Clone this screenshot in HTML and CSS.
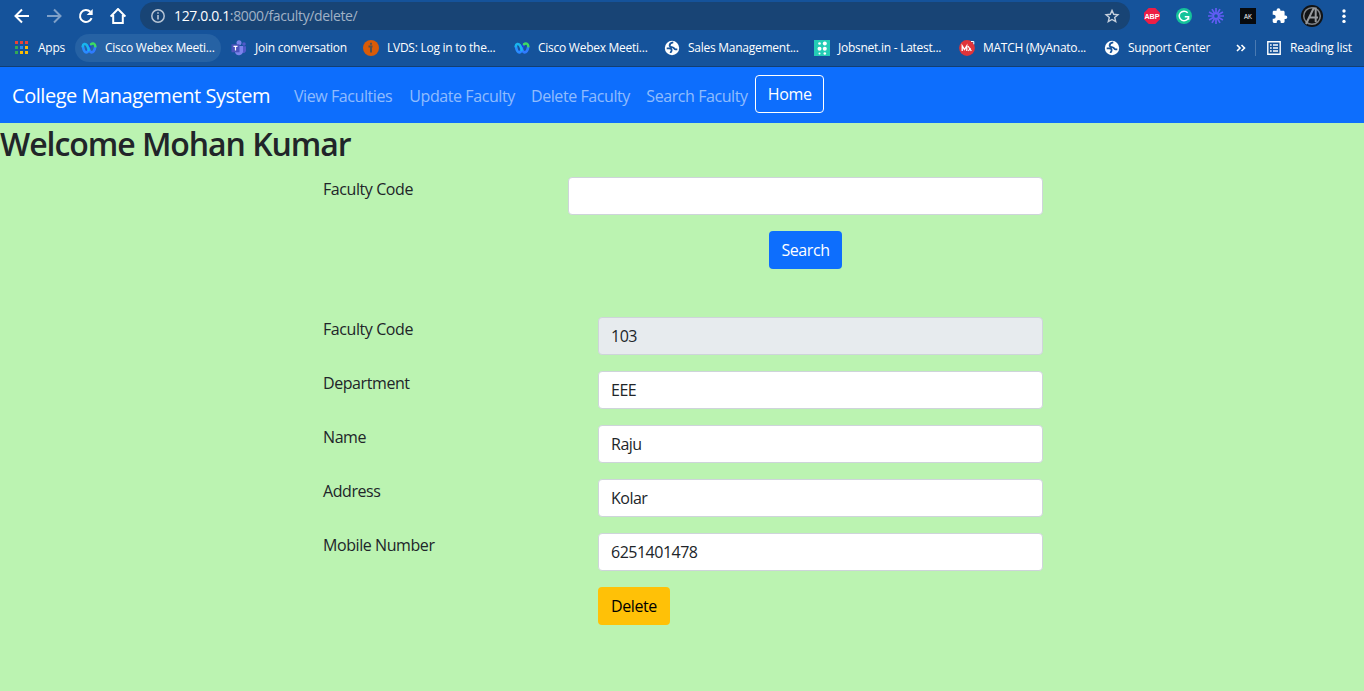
FILE: index.html
```html
<!DOCTYPE html>
<html lang="en">
<head>
<meta charset="utf-8">
<title>College Management System</title>
<link rel="stylesheet" href="styles.css">
</head>
<body>
<svg class="defs" width="0" height="0">
  <symbol id="webex" viewBox="0 0 16 16">
    <path d="M5 12.300c2.600 0 3.300-8.300 6-8.300" fill="none" stroke="#1c3fe6" stroke-width="3"/>
    <path d="M14.200 7C13.600 10.300 12 12.300 10.600 12.300 9 12.300 8.200 10.500 7.600 8" fill="none" stroke="#2f7bff" stroke-width="2.700" stroke-linecap="round"/>
    <path d="M1.900 6.500C2.600 10.300 3.600 12.300 5.300 12.300c.8 0 1.400-.5 1.900-1.500" fill="none" stroke="#2a8cff" stroke-width="2.700" stroke-linecap="round"/>
    <path d="M1.800 6.300C1.800 3.800 4.400 3 5.900 5.200 7 6.800 7.200 8.500 7.700 9.800" fill="none" stroke="#18b5ee" stroke-width="2.500" stroke-linecap="round"/>
    <path d="M10 4.300c1.700-1.500 4.200-.8 4.300 2" fill="none" stroke="#3ddb62" stroke-width="2.500" stroke-linecap="round"/>
  </symbol>
  <symbol id="globe" viewBox="0 0 16 16">
    <circle cx="8" cy="8" r="7.200" fill="#fff"/>
    <path d="M9.300 2.400C7.500 2.600 5.600 3.800 5.600 5.500c0 1.600 1.400 1.700 3.100 1.900 1.400.2 1.500 1.900 2.800 1.900h1.800M2.700 8.300h2.800c1.200.1 2.300.9 2.100 2.300-.2 1-1 .9-1 2.500" fill="none" stroke="#15539b" stroke-width="1.800"/>
  </symbol>
</svg>

<header class="browser">
  <div class="toolbar">
    <svg class="tool" viewBox="0 0 16 16"><path d="M15 8H2M8 1.500 1.500 8 8 14.500" fill="none" stroke="#fff" stroke-width="2"/></svg>
    <svg class="tool dim" viewBox="0 0 16 16"><path d="M1 8h13M8 1.500 14.500 8 8 14.500" fill="none" stroke="#fff" stroke-width="2"/></svg>
    <svg class="tool" viewBox="0 0 16 16"><path d="M13.600 10.200A6 6 0 1 1 12.300 3.800" fill="none" stroke="#fff" stroke-width="2"/><path d="M14.700 1v6H8.700z" fill="#fff"/></svg>
    <svg class="tool" viewBox="0 0 16 16"><path d="M.6 8.500 8 1l7.400 7.500M3.200 7v8h9.600V7" fill="none" stroke="#fff" stroke-width="2"/></svg>
    <div class="omnibox">
      <svg class="info" viewBox="0 0 16 16"><circle cx="8" cy="8" r="6.200" fill="none" stroke="#b6c4d4" stroke-width="1.500"/><path d="M8 7v4.500M8 4.200v1.600" stroke="#b6c4d4" stroke-width="1.600"/></svg>
      <span class="url"><b>127.0.0.1</b>:8000/faculty/delete/</span>
      <svg class="star" viewBox="0 0 16 16"><path d="m8 2.400 1.700 3.900 4.200.4-3.200 2.800 1 4.100L8 11.500l-3.700 2.100 1-4.100-3.200-2.800 4.200-.4z" fill="none" stroke="#c7d1dd" stroke-width="1.400"/></svg>
    </div>
    <div class="extensions">
      <svg viewBox="0 0 16 16"><path d="M4.700 0h6.600L16 4.700v6.600L11.300 16H4.700L0 11.300V4.700z" fill="#ed1e45"/><text x="8" y="10.700" class="abp">ABP</text></svg>
      <svg viewBox="0 0 16 16"><circle cx="8" cy="8" r="8" fill="#15c39a"/><path d="M11.700 4.800A4.800 4.800 0 1 0 12.600 9.500M8.800 8.800h3.800v3" fill="none" stroke="#fff" stroke-width="1.500"/></svg>
      <svg viewBox="0 0 16 16"><g stroke="#625df5" stroke-width="1.700"><path d="M8 0v16M0 8h16M4 1.070l8 13.860M1.070 4l13.860 8M1.070 12 14.930 4M4 14.930 12 1.070"/></g><circle cx="8" cy="8" r="2.500" fill="#15539b" stroke="#625df5" stroke-width="1.300"/></svg>
      <svg viewBox="0 0 16 16"><path d="M0 0h16v16H0z" fill="#070a0e"/><text transform="translate(8 10.900) scale(.75 1)" class="ak">AK</text></svg>
      <svg viewBox="0 0 16 16"><path d="M13.600 7.500h-1V4.200c0-.8-.6-1.400-1.400-1.400H8.400v-.7a1.900 1.900 0 0 0-3.800 0v.7H2C1.200 2.800.7 3.400.7 4.200v2.600h1a2 2 0 0 1 0 4h-1v2.700c0 .8.600 1.400 1.300 1.400h2.700v-1a2 2 0 0 1 4 0v1h2.500c.8 0 1.400-.6 1.400-1.400v-2.600h1a1.700 1.700 0 0 0 0-3.400z" fill="#fff"/></svg>
      <svg class="avatar" viewBox="0 0 22 22"><circle cx="11" cy="11" r="11" fill="#111315"/><circle cx="11" cy="11" r="8.300" fill="none" stroke="#7d8186" stroke-width="1.500"/><path d="M5 19 12.500 3.500h2.200V17M8.500 12.500H17" fill="none" stroke="#96999d" stroke-width="2"/></svg>
      <svg class="menu" viewBox="0 0 16 16"><g fill="#fff"><circle cx="8" cy="3" r="1.700"/><circle cx="8" cy="8.200" r="1.700"/><circle cx="8" cy="13.400" r="1.700"/></g></svg>
    </div>
  </div>

  <div class="bookmarks">
    <div class="mark"><svg viewBox="0 0 16 16"><path d="M1 1h3v3H1zM6 1h3v3H6zM11 1h3v3h-3z" fill="#ea4335"/><path d="M1 6h3v3H1zM1 11h3v3H1z" fill="#34a853"/><path d="M6 6h3v3H6z" fill="#2f8cf0"/><path d="M11 6h3v3h-3zM6 11h3v3H6zM11 11h3v3h-3z" fill="#fbbc05"/></svg><span>Apps</span></div>
    <div class="mark active"><svg viewBox="0 0 16 16"><use href="#webex"/></svg><span>Cisco Webex Meeti...</span></div>
    <div class="mark"><svg viewBox="0 0 16 16"><circle cx="13" cy="4" r="1.800" fill="#5059c9"/><path d="M10 6.200h5v4.300a2.500 2.500 0 0 1-4 2z" fill="#5059c9"/><circle cx="8" cy="2.700" r="2.500" fill="#7b83eb"/><path d="M4 6h8v5.500a4.100 4.100 0 0 1-8 .8z" fill="#7b83eb"/><path d="M.5 4.300h8v8h-8z" fill="#4b53bc"/><path d="M2.500 6.300h4M4.500 6.300v4.300" stroke="#fff" stroke-width="1.200"/></svg><span>Join conversation</span></div>
    <div class="mark"><svg viewBox="0 0 16 16"><circle cx="8" cy="8" r="8" fill="#d95b08"/><path d="M5.500 6.500h4M8 6v6.500M8 2.700v2" stroke="#55504d" stroke-width="2"/></svg><span>LVDS: Log in to the...</span></div>
    <div class="mark"><svg viewBox="0 0 16 16"><use href="#webex"/></svg><span>Cisco Webex Meeti...</span></div>
    <div class="mark"><svg viewBox="0 0 16 16"><use href="#globe"/></svg><span>Sales Management...</span></div>
    <div class="mark"><svg viewBox="0 0 16 16"><path d="M0 0h16v16H0z" fill="#24ccb5"/><g fill="#fff"><circle cx="5.500" cy="3.500" r="1.300"/><circle cx="10.800" cy="3.500" r="2"/><circle cx="5.500" cy="8.800" r="2"/><circle cx="10.800" cy="8.800" r="2"/><circle cx="5.500" cy="13.500" r="1"/><circle cx="10.800" cy="13.500" r="1.300"/></g></svg><span>Jobsnet.in - Latest...</span></div>
    <div class="mark"><svg viewBox="0 0 16 16"><circle cx="8" cy="8" r="7.900" fill="#e0343a"/><path d="M3.200 11V5.800l2.300 3.700 2.300-3.700V11M9 6l3.300 5M11.500 8 9.400 11" fill="none" stroke="#fff" stroke-width="1.300"/><path d="M12 1.500h2.800v2.800" fill="none" stroke="#fff"/></svg><span>MATCH (MyAnato...</span></div>
    <div class="mark"><svg viewBox="0 0 16 16"><use href="#globe"/></svg><span>Support Center</span></div>
    <svg class="more" viewBox="0 0 10 8"><path d="m1 1 3 3-3 3M5.500 1l3 3-3 3" fill="none" stroke="#fff" stroke-width="1.600"/></svg>
    <div class="mark reading"><svg viewBox="0 0 16 16"><path d="M1.800 1.800h12.400v12.400H1.800z" fill="none" stroke="#fff" stroke-width="1.400"/><path d="M4 5h1.700M7 5h5M4 8h1.700M7 8h5M4 11h1.700M7 11h5" stroke="#fff" stroke-width="1.500"/></svg><span>Reading list</span></div>
  </div>
</header>

<nav class="navbar">
  <a class="brand">College Management System</a>
  <a class="link">View Faculties</a>
  <a class="link">Update Faculty</a>
  <a class="link">Delete Faculty</a>
  <a class="link">Search Faculty</a>
  <a class="btn home">Home</a>
</nav>

<main>
  <h1>Welcome Mohan Kumar</h1>
  <form class="form search-form">
    <label>Faculty Code</label><input type="text">
    <div class="submit"><button type="button" class="btn primary">Search</button></div>
  </form>
  <form class="form delete-form">
    <label>Faculty Code</label><input type="text" value="103" readonly>
    <label>Department</label><input type="text" value="EEE">
    <label>Name</label><input type="text" value="Raju">
    <label>Address</label><input type="text" value="Kolar">
    <label>Mobile Number</label><input type="text" value="6251401478">
    <div class="submit"><button type="button" class="btn warning">Delete</button></div>
  </form>
</main>
</body>
</html>
```
FILE: styles.css
```css
* { box-sizing: border-box; }

body {
  margin: 0;
  min-height: 691px;
  overflow: hidden;
  background: #bbf3b1;
  color: #212529;
  font: 16px/24px "Open Sans", "Noto Sans", sans-serif;
  letter-spacing: -0.42px;
}

.defs { display: block; }
svg { display: block; flex: none; }

/* Browser chrome */
.browser {
  height: 67px;
  background: #15539b;
  border-bottom: 1px solid #113f74;
  color: #fff;
}

.toolbar {
  display: flex;
  align-items: center;
  gap: 16px;
  height: 32px;
  padding-left: 14px;
}
.tool { width: 16px; height: 16px; }
.dim { opacity: .45; }

.omnibox {
  display: flex;
  align-items: center;
  width: 990px;
  height: 28px;
  margin-left: -2px;
  padding: 0 10px;
  border-radius: 14px;
  background: #184475;
}
.info { width: 16px; height: 16px; }
.url {
  flex: 1;
  margin-left: 8px;
  color: #a1b2c6;
  font-size: 14px;
  letter-spacing: -0.36px;
}
.url b { color: #fff; font-weight: 400; }
.star { width: 16px; height: 16px; }

.extensions {
  display: flex;
  align-items: center;
  gap: 16px;
  margin-left: -2px;
}
.extensions svg { width: 16px; height: 16px; }
.extensions .avatar { width: 22px; height: 22px; margin: 0 -3px; }
.abp, .ak { fill: #fff; text-anchor: middle; letter-spacing: 0; font-family: "Liberation Sans", sans-serif; }
.abp { font-size: 7.2px; font-weight: 700; }
.ak { font-size: 8px; }

.bookmarks {
  display: grid;
  grid-template-columns: 67px 150px 132px 151px 150px 150px 145px 145px 138px 19px 109px;
  align-items: center;
  height: 28px;
  margin-top: 2px;
  padding-left: 8px;
  font-size: 12px;
  line-height: 16px;
  letter-spacing: -0.26px;
  white-space: nowrap;
}
.mark {
  display: flex;
  align-items: center;
  gap: 8px;
  height: 28px;
  padding-left: 6px;
}
.mark svg { width: 16px; height: 16px; }
.mark.active { width: 146px; border-radius: 14px; background: #2662a4; }
.more { width: 10px; height: 8px; }
.mark.reading {
  height: 16px;
  padding-left: 10px;
  border-left: 1px solid #4b7ab1;
  letter-spacing: -0.2px;
}

/* Page navigation */
.navbar {
  display: flex;
  align-items: center;
  height: 56px;
  padding: 1px 0 0 12px;
  background: #0d6efd;
  white-space: nowrap;
}
.brand {
  width: 274px;
  padding-top: 1px;
  color: #fff;
  font-size: 20px;
  line-height: 30px;
  letter-spacing: -0.46px;
}
.link { width: 115.300px; padding-left: 8px; color: rgba(255, 255, 255, .55); }
.link:nth-child(3) { width: 121.700px; }
.link:nth-child(5) { width: 117px; }

.btn {
  height: 38px;
  padding: 6px 0;
  border: 1px solid transparent;
  border-radius: 4px;
  font: inherit;
  letter-spacing: inherit;
  text-align: center;
}
.home { width: 69px; margin-top: -3px; border-color: #fff; color: #fff; letter-spacing: -0.3px; }

/* Faculty forms */
h1 {
  margin: 0 0 14px;
  padding-top: 2px;
  font-size: 32px;
  font-weight: 600;
  line-height: 38px;
  letter-spacing: -1.05px;
}

.form {
  display: grid;
  row-gap: 16px;
  width: 720px;
  margin-left: 323px;
}
.search-form { grid-template-columns: 245px 475px; margin-bottom: 48px; }
.delete-form { grid-template-columns: 275px 445px; }

input {
  width: 100%;
  height: 38px;
  padding: 6px 12px;
  border: 1px solid #ced4da;
  border-radius: 4px;
  background: #fff;
  color: #212529;
  font: inherit;
  letter-spacing: -0.5px;
}
input[readonly] { background: #e7ebee; }

.submit { grid-column: 2; }
.search-form .submit { text-align: center; }
.btn.primary { width: 73px; background: #0d6efd; color: #fff; }
.btn.warning { width: 72px; background: #ffc107; color: #000; }
.submit .btn { display: inline-block; vertical-align: top; }
```
